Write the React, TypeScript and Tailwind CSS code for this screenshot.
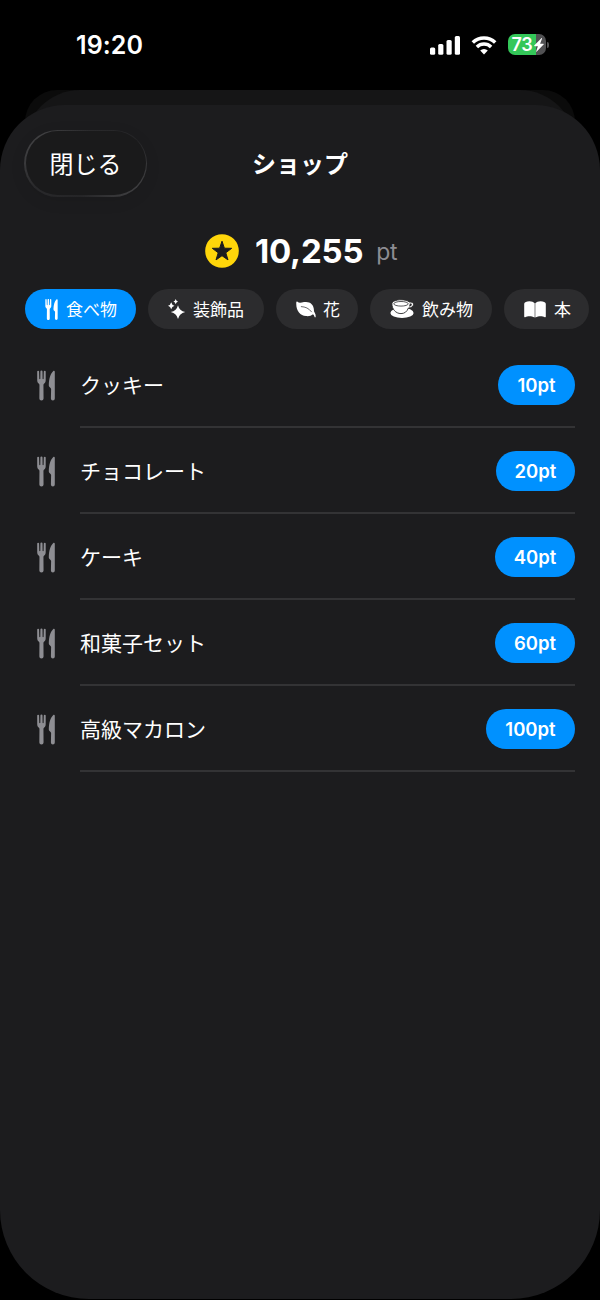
import type { ReactNode } from "react";

const FONT =
  "font-['Inter','Noto_Sans_CJK_JP',sans-serif]";

function Utensils({ className }: { className: string }) {
  return (
    <svg viewBox="0 0 18 30" fill="currentColor" className={className}>
      <path d="M.2 1.100a.95.95 0 0 1 1.900 0L2.300 8.300c.1.600 1 .6 1 0L3.400 1a1.050 1.050 0 0 1 2.100 0l.1 7.300c0 .6.900.6 1 0L6.800 1.100a.95.95 0 0 1 1.900 0V9.500c0 1.900-.6 2.900-1.500 3.600-.6.4-.8.9-.75 1.600l.1 13.300a2.100 2.100 0 0 1-4.200 0l.1-13.300c0-.7-.15-1.200-.75-1.600C.8 12.400.2 11.400.2 9.500Z" />
      <path d="M17.800 1.300v26.700a1.950 1.950 0 0 1-3.900 0l.2-9.300c0-.7-.2-1.100-.8-1.500-1.100-.7-1.600-1.500-1.500-2.900C12 8.500 13.300 3.200 16.300.5c.7-.6 1.500-.2 1.500.8Z" />
    </svg>
  );
}

function Sparkles() {
  return (
    <svg viewBox="0 0 18 20" fill="currentColor" className="h-5 w-[18px]">
      <path d="M10 6.200Q11.300 11.700 17.200 13 11.300 14.300 10 20 8.700 14.300 2.800 13 8.700 11.700 10 6.200Z" />
      <path d="M3.200 3.200Q3.900 6 6.500 6.800 3.900 7.500 3.200 10.300 2.500 7.500 0 6.800 2.500 6 3.200 3.200Z" />
      <path d="M7.700 0Q8.200 2.100 10 2.600 8.200 3.100 7.700 5.200 7.200 3.100 5.400 2.600 7.200 2.100 7.700 0Z" />
    </svg>
  );
}

function Leaf() {
  return (
    <svg viewBox="0 0 20 17" className="h-[17px] w-5">
      <path
        fill="currentColor"
        d="M.3 1.200C.4.400 1 .3 1.500.8 2.800 2 5 1.700 8 1.100c5.500-1 9.300 1.900 9.800 6.700.2 1.800.1 2.700.8 3.800.8 1.300 1.200 2.600 1.100 4 0 1-.9 1.100-1.200.2-.3-1.200-.8-2-1.500-2.600-1.600 1.500-4.200 2.300-7 1.900C4 14.500-.3 9.500.3 1.200Z"
      />
      <path d="M5.300 5.600c4.200.2 7.500 1.700 10.200 5.200" fill="none" stroke="#2c2c2e" strokeWidth=".7" strokeLinecap="round" />
    </svg>
  );
}

function Cup() {
  return (
    <svg viewBox="0 0 24 20" className="h-5 w-6">
      <ellipse cx="12" cy="13.900" rx="11.600" ry="5.100" fill="currentColor" />
      <path
        fill="currentColor"
        stroke="#2c2c2e"
        strokeWidth=".9"
        d="M1.900 4.800C1.900 2.500 6 .8 11 .8c3.700 0 6.800.8 8.300 2.200 2.600-.3 4.300.8 4.200 2.500-.1 2.100-2.200 3.400-5.100 3.500-1.400 3.700-3.900 5.600-7.400 5.600-5.400 0-9.100-4.800-9.100-9.800Z"
      />
      <ellipse cx="11" cy="4.800" rx="7.200" ry="2.300" fill="none" stroke="#2c2c2e" strokeWidth=".8" />
      <path d="M19.800 4.600c1.400-.2 2.100.3 2 1.100-.1 1.100-1.400 1.800-2.800 1.900.4-.9.7-1.900.8-3Z" fill="#2c2c2e" />
    </svg>
  );
}

function Book() {
  return (
    <svg viewBox="0 0 22 17" fill="currentColor" className="h-[17px] w-[22px]">
      <path d="M10.700 2.200v14.400C8.800 15.500 7.200 15.200 5.500 15.200c-1.700 0-3 .3-4.300 1-.6.3-1 .1-1-.6V2.800C.2 1.100 2.700.2 5.400.2c2.200 0 4.300.7 5.300 2ZM11.300 2.200v14.400c1.900-1.100 3.500-1.400 5.200-1.400 1.700 0 3 .3 4.300 1 .6.3 1 .1 1-.6V2.800c0-1.700-2.500-2.600-5.200-2.600-2.200 0-4.300.7-5.300 2Z" />
    </svg>
  );
}

function StatusBar() {
  return (
    <div className="flex h-[90px] items-start justify-between pl-[76px] pr-[51px] pt-8">
      <span className="text-[25px] leading-[26px] font-semibold tracking-[0.100px]">19:20</span>
      <div className="flex items-center pt-[2px]">
        <svg viewBox="0 0 30 20" fill="currentColor" className="h-5 w-[30px]">
          <rect x="0" y="12.500" width="5.200" height="7.200" rx="1.500" />
          <rect x="8.200" y="9" width="5.200" height="10.700" rx="1.500" />
          <rect x="16.500" y="5" width="5.200" height="14.700" rx="1.500" />
          <rect x="24.800" y="1" width="5.200" height="18.700" rx="1.500" />
        </svg>
        <svg viewBox="0 0 26 20" className="ml-[11px] h-5 w-[26px]">
          <path d="M1.800 7.600a16 16 0 0 1 22.400 0" fill="none" stroke="currentColor" strokeWidth="3.500" />
          <path d="M5.900 12a10.200 10.200 0 0 1 14.200 0" fill="none" stroke="currentColor" strokeWidth="3.500" />
          <path d="M13 19.500 9.200 15.600a5.400 5.400 0 0 1 7.600 0Z" fill="currentColor" />
        </svg>
        <div className="ml-[11px] flex h-[21px] w-[38px] items-center overflow-hidden rounded-[7px] bg-[linear-gradient(90deg,#34c759_73%,#515153_73%)] pl-1">
          <span className="w-[21px] text-[18px] leading-[21px] font-semibold tracking-[-0.300px]">73</span>
          <svg viewBox="0 0 10 14" fill="currentColor" className="ml-px h-[14px] w-[10px] shrink-0">
            <path d="M7.400.3.400 7.300c-.4.400-.2.900.3.900h3.200l-1.700 5.100c-.1.500.3.700.6.300l6.800-7c.4-.4.200-.9-.3-.9H6.100L8 .7c.2-.5-.2-.8-.6-.4Z" />
          </svg>
        </div>
        <div className="ml-[1.500px] h-[6px] w-[2px] rounded-r-full bg-[#515153]" />
      </div>
    </div>
  );
}

function Chip({ icon, label, active, className }: { icon: ReactNode; label: string; active?: boolean; className: string }) {
  return (
    <button
      className={`flex h-10 shrink-0 items-center rounded-full pl-5 text-[17px] leading-5 whitespace-nowrap ${active ? "bg-[#0091ff]" : "bg-[#2c2c2e]"} ${className}`}
    >
      {icon}
      <span className="pt-[2px]">{label}</span>
    </button>
  );
}

const items = [
  { name: "クッキー", price: "10pt", width: "w-[77px]" },
  { name: "チョコレート", price: "20pt", width: "w-[79px]" },
  { name: "ケーキ", price: "40pt", width: "w-[80px]" },
  { name: "和菓子セット", price: "60pt", width: "w-[80px]" },
  { name: "高級マカロン", price: "100pt", width: "w-[89px]" },
];

export default function App() {
  return (
    <div lang="ja" className={`relative h-[1300px] w-[600px] overflow-hidden bg-black text-white ${FONT}`}>
      <StatusBar />
      <div className="absolute top-[90px] left-[25px] h-[90px] w-[550px] rounded-t-[32px] bg-[#0b0b0b]" />
      <div className="absolute top-[90px] left-[25px] h-[90px] w-[550px] rounded-t-[55px] bg-[#151516]" />
      <main className="relative mt-[15px] flex h-[1194px] flex-col rounded-t-[65px] rounded-b-[89px] bg-[#1c1c1e]">
        <header className="grid h-[116px] grid-cols-[1fr_auto_1fr] items-center px-6">
          <button className="h-[67px] w-[123px] rounded-full bg-[linear-gradient(135deg,#4a4a4c,#29292b_35%,#252527_65%,#48484a)] p-[1.500px] shadow-[0_4px_16px_rgba(0,0,0,0.08)]">
            <span className="flex h-full w-full items-center justify-center rounded-full bg-[#1a1a1b] pt-[3px] text-[24px]">閉じる</span>
          </button>
          <h1 className="pt-[3px] text-[24px] font-bold">ショップ</h1>
        </header>
        <div className="flex h-[60px] items-center pl-[205px]">
          <svg viewBox="0 0 34 34" className="h-[34px] w-[34px]">
            <circle cx="17" cy="17" r="16.800" fill="#ffd60a" />
            <path
              d="m17 7.200 2.400 7 7.300.1-5.900 4.500 2.200 7.100-6-4.200-6 4.200 2.200-7.100-5.900-4.500 7.300-.1Z"
              fill="#1c1c1e"
              stroke="#1c1c1e"
              strokeLinejoin="round"
            />
          </svg>
          <span className="ml-4 text-[33px] leading-10 font-bold tracking-[-0.200px]">10,255</span>
          <span className="ml-[13px] pt-[2px] text-[23px] tracking-[-0.300px] text-[#8d8d93]">pt</span>
        </div>
        <nav className="mt-[8px] flex gap-3 overflow-hidden pl-[25px]">
          <Chip active label="食べ物" className="w-[111px]" icon={<Utensils className="mr-2 h-[21px] w-[13px]" />} />
          <Chip label="装飾品" className="w-[116px]" icon={<span className="mr-[7px]"><Sparkles /></span>} />
          <Chip label="花" className="w-[82px]" icon={<span className="mr-[7px]"><Leaf /></span>} />
          <Chip label="飲み物" className="w-[122px]" icon={<span className="mr-2"><Cup /></span>} />
          <Chip label="本" className="w-[85px]" icon={<span className="mr-2"><Book /></span>} />
        </nav>
        <ul className="mt-[13px]">
          {items.map((item) => (
            <li key={item.name} className="flex h-[86px] pr-[25px] pl-[37px]">
              <Utensils className="mt-[28px] h-[31px] w-[18px] text-[#8e8e93]" />
              <div className="ml-[25px] flex flex-1 items-center justify-between border-b-2 border-[#333335] pt-[2px]">
                <span className="pt-[2px] text-[21px]">{item.name}</span>
                <button className={`flex h-10 items-center justify-center rounded-full bg-[#0091ff] pt-px text-[18.500px] font-semibold ${item.width}`}>
                  {item.price}
                </button>
              </div>
            </li>
          ))}
        </ul>
      </main>
    </div>
  );
}
